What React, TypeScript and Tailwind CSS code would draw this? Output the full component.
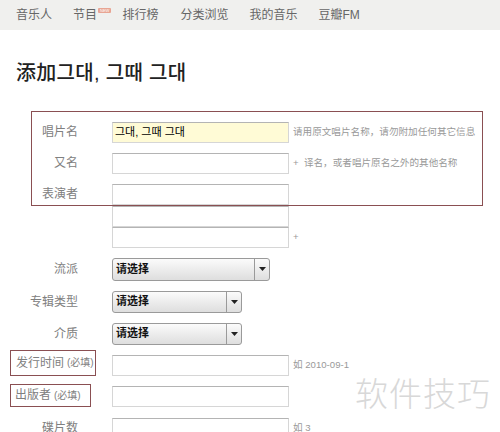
import React from "react";

const F = "font-['Liberation_Sans','Noto_Sans_CJK_SC','Noto_Sans_CJK_KR',sans-serif]";

function Input({ children, yellow }: { children?: React.ReactNode; yellow?: boolean }) {
  return (
    <div
      className={`w-[177px] h-[21px] border border-[#d6d6d6] border-t-[#b4b4b4] flex items-center pl-[2px] text-[11px] text-black ${
        yellow ? "bg-[#fffbd6]" : "bg-white"
      }`}
    >
      {children}
    </div>
  );
}

function Select({ w, h }: { w: string; h: string }) {
  return (
    <div
      className={`${w} ${h} rounded-[3px] border border-[#9a9a9a] bg-gradient-to-b from-[#fbfbfb] to-[#dedede] flex items-stretch`}
    >
      <div className="flex-1 flex items-center pl-[3px] text-[11px] font-bold text-[#111]">请选择</div>
      <div className="w-[15px] border-l border-[#9a9a9a] flex items-center justify-center">
        <svg width="7" height="4" viewBox="0 0 7 4">
          <path d="M0 0 L7 0 L3.5 4 Z" fill="#222" />
        </svg>
      </div>
    </div>
  );
}

function Label({ children, w = "w-[112px]" }: { children: React.ReactNode; w?: string }) {
  return (
    <div className={`${w} shrink-0 pr-[34px] text-right text-[12px] text-[#808080]`}>{children}</div>
  );
}

function Hint({ children }: { children: React.ReactNode }) {
  return <div className="ml-[4px] text-[9.6px] text-[#999] whitespace-nowrap">{children}</div>;
}

export default function App() {
  return (
    <div className={`relative w-[500px] h-[432px] overflow-hidden bg-white ${F}`}>
      {/* nav */}
      <div className="h-[30px] bg-[#f0f0ee] flex items-center text-[12px] text-[#666]">
        <span className="ml-[16px]">音乐人</span>
        <span className="ml-[21px] flex items-start">
          节目
          <span className="ml-[1px] mt-[2px] bg-[#e8a593] text-white text-[4px] leading-[5px] px-[2px] rounded-[1px]">
            NEW
          </span>
        </span>
        <span className="ml-[11px]">排行榜</span>
        <span className="ml-[22px]">分类浏览</span>
        <span className="ml-[21px]">我的音乐</span>
        <span className="ml-[21px]">豆瓣FM</span>
      </div>

      {/* title */}
      <h1 className="mt-[31px] ml-[16px] text-[20px] leading-[24px] font-medium text-[#222] tracking-[0.3px]">
        添加그대, 그때 그대
      </h1>

      {/* boxed section */}
      <div className="mt-[26px] ml-[31px] w-[452px] border-[1.5px] border-[#8a4f52] pt-[9.5px] flex flex-col gap-[10px]">
        <div className="flex items-center h-[21px]">
          <Label w="w-[80px]">唱片名</Label>
          <Input yellow>그대, 그때 그대</Input>
          <Hint>请用原文唱片名称，请勿附加任何其它信息</Hint>
        </div>
        <div className="flex items-center h-[21px]">
          <Label w="w-[80px]">又名</Label>
          <Input />
          <Hint>+&nbsp; 译名，或者唱片原名之外的其他名称</Hint>
        </div>
        <div className="flex items-center h-[21px]">
          <Label w="w-[80px]">表演者</Label>
          <Input />
        </div>
      </div>

      <div className="flex flex-col">
        <div className="flex items-center h-[21px]">
          <Label> </Label>
          <Input />
        </div>
        <div className="flex items-center h-[21px]">
          <Label> </Label>
          <Input />
          <Hint>+</Hint>
        </div>

        <div className="mt-[10px] flex items-center">
          <Label>流派</Label>
          <Select w="w-[158px]" h="h-[23px]" />
        </div>
        <div className="mt-[10px] flex items-center">
          <Label>专辑类型</Label>
          <Select w="w-[130px]" h="h-[22px]" />
        </div>
        <div className="mt-[10px] flex items-center">
          <Label>介质</Label>
          <Select w="w-[130px]" h="h-[22px]" />
        </div>

        <div className="mt-[5px] flex items-end">
          <div className="w-[112px] shrink-0 pl-[10px]">
            <div className="w-[86px] h-[26px] border-[1.5px] border-[#8a4f52] flex items-center pl-[5px] text-[12px] text-[#808080] whitespace-nowrap">
              发行时间<span className="ml-[3px] text-[10px]">(必填)</span>
            </div>
          </div>
          <Input />
          <div className="self-center mt-[5px]">
            <Hint>如 2010-09-1</Hint>
          </div>
        </div>

        <div className="mt-[8px] flex items-end">
          <div className="w-[112px] shrink-0 pl-[10px]">
            <div className="w-[81px] h-[23px] border-[1.5px] border-[#8a4f52] flex items-center pl-[4px] text-[12px] text-[#808080] whitespace-nowrap">
              出版者<span className="ml-[3px] text-[10px]">(必填)</span>
            </div>
          </div>
          <Input />
        </div>

        <div className="mt-[11px] flex items-center">
          <Label>碟片数</Label>
          <Input />
          <Hint>如 3</Hint>
        </div>
      </div>

      {/* watermark */}
      <div className="absolute left-[355px] top-[372px] text-[33px] leading-[40px] text-[#d8d8d8] font-['Noto_Sans_CJK_SC',sans-serif] font-light tracking-[1px]">
        软件技巧
      </div>
    </div>
  );
}
